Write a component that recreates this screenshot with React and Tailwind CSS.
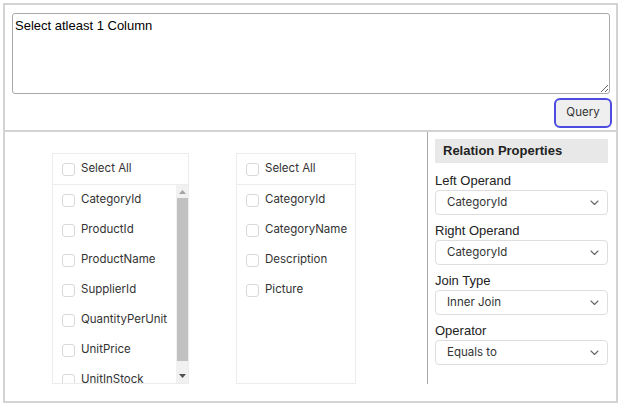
import React from "react";

const leftColumns = [
  "CategoryId",
  "ProductId",
  "ProductName",
  "SupplierId",
  "QuantityPerUnit",
  "UnitPrice",
  "UnitInStock",
];

const rightColumns = ["CategoryId", "CategoryName", "Description", "Picture"];

const Box = () => (
  <span className="w-[13px] h-[13px] shrink-0 rounded-[3px] border border-[#d9d9d9] bg-white" />
);

const Row = ({ label, header }) => (
  <div
    className={
      "flex items-center gap-[6px] pl-[9px] shrink-0 " +
      (header ? "h-[31px] border-b border-[#ececec]" : "h-[30px]")
    }
  >
    <Box />
    <span className="text-[11.5px] text-[#333] whitespace-nowrap">{label}</span>
  </div>
);

const Chevron = () => (
  <svg width="9" height="6" viewBox="0 0 9 6" fill="none">
    <path d="M1 1l3.5 3.5L8 1" stroke="#666" strokeWidth="1.1" strokeLinecap="round" strokeLinejoin="round" />
  </svg>
);

const Field = ({ label, value, first }) => (
  <div className={first ? "mt-[10px]" : "mt-[8px]"}>
    <div className="h-[16px] leading-[16px] text-[13px] text-[#222]" style={{ fontFamily: '"Liberation Sans", Arial, sans-serif' }}>
      {label}
    </div>
    <div className="mt-[1px] h-[25px] flex items-center justify-between pl-[11px] pr-[8px] border border-[#dedede] rounded-[4px] bg-white">
      <span className="text-[11.5px] text-[#333]">{value}</span>
      <Chevron />
    </div>
  </div>
);

export default function App() {
  return (
    <div className="bg-white w-[624px] h-[409px] pt-[3px] pl-[3px]" style={{ fontFamily: "Inter, sans-serif" }}>
      <div className="w-[615px] h-[400px] border-2 border-[#d3d3d3] flex flex-col">

        {/* query area */}
        <div className="pt-[8px] pl-[7px] pr-[4px] pb-[2px] border-b-2 border-[#d3d3d3]">
          <textarea
            readOnly
            defaultValue="Select atleast 1 Column"
            className="block w-[598px] h-[81px] resize-y border border-[#a9a9a9] rounded-[3px] px-[2px] py-[2px] text-[13px] text-black outline-none"
            style={{ fontFamily: '"Liberation Sans", Arial, sans-serif' }}
          />
          <div className="flex justify-end mt-[4px]">
            <button className="w-[58px] h-[30px] rounded-[6px] border-2 border-[#4c4ce0] bg-[#efefef] text-[11.5px] text-[#333]">
              Query
            </button>
          </div>
        </div>

        {/* designer area */}
        <div className="flex flex-1">
          <div className="w-[422px] flex gap-[47px] pl-[47px] pt-[21px]">

            <div className="w-[137px] h-[231px] border border-[#ececec] flex flex-col">
              <Row label="Select All" header />
              <div className="flex flex-1 overflow-hidden">
                <div className="flex-1 flex flex-col overflow-hidden">
                  {leftColumns.map((c) => (
                    <Row key={c} label={c} />
                  ))}
                </div>
                <div className="w-[12px] bg-[#f1f1f1] flex flex-col items-center">
                  <div className="h-[13px] flex items-center justify-center">
                    <svg width="7" height="4" viewBox="0 0 7 4"><path d="M0 4L3.5 0 7 4z" fill="#a3a3a3" /></svg>
                  </div>
                  <div className="w-[11px] h-[163px] bg-[#c1c1c1]" />
                  <div className="flex-1 flex items-end pb-[5px]">
                    <svg width="7" height="4" viewBox="0 0 7 4"><path d="M0 0L3.5 4 7 0z" fill="#505050" /></svg>
                  </div>
                </div>
              </div>
            </div>

            <div className="w-[120px] h-[231px] border border-[#ececec] flex flex-col">
              <Row label="Select All" header />
              {rightColumns.map((c) => (
                <Row key={c} label={c} />
              ))}
            </div>

          </div>

          {/* relation properties */}
          <div className="w-[189px] h-[252px] border-l border-[#a9a9a9] pl-[7px] pr-[8px] pt-[7px]">
            <div
              className="h-[24px] leading-[24px] bg-[#e8e8e8] pl-[8px] text-[13px] font-bold text-[#222]"
              style={{ fontFamily: '"Liberation Sans", Arial, sans-serif' }}
            >
              Relation Properties
            </div>
            <Field label="Left Operand" value="CategoryId" first />
            <Field label="Right Operand" value="CategoryId" />
            <Field label="Join Type" value="Inner Join" />
            <Field label="Operator" value="Equals to" />
          </div>
        </div>

      </div>
    </div>
  );
}
